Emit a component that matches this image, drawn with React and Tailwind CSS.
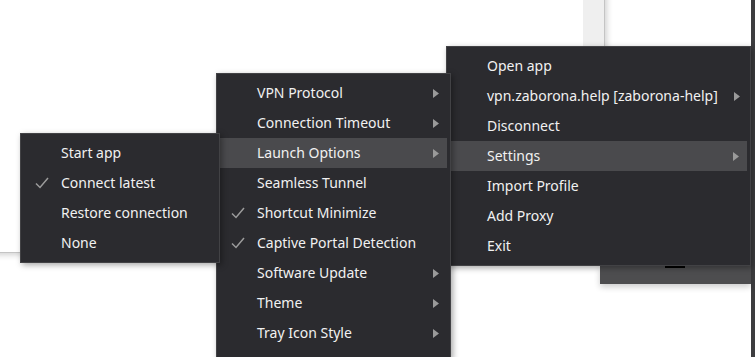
import React from 'react'

const font = { fontFamily: '"Noto Sans", "Open Sans", sans-serif' }

function Check() {
  return (
    <svg width="14" height="12" viewBox="0 0 14 12" className="block">
      <polyline points="1,6.5 5,10.5 13,1" fill="none" stroke="#9c9c9c" strokeWidth="1.5" />
    </svg>
  )
}

function Arrow() {
  return (
    <svg width="6" height="9" viewBox="0 0 6 9" className="block">
      <polygon points="0,0 6,4.5 0,9" fill="#9a9a9a" />
    </svg>
  )
}

function Item({ label, checked, sub, active }) {
  return (
    <div className={`h-[30px] grid grid-cols-[37px_1fr_auto] items-center ${active ? 'bg-[#4a4a4d]' : ''}`}>
      <div className="pl-[11px]">{checked && <Check />}</div>
      <span className="text-[14px] text-[#f1f1f1] whitespace-nowrap leading-none">{label}</span>
      <div className="pr-[8px] pl-4">{sub && <Arrow />}</div>
    </div>
  )
}

function Menu({ items, className }) {
  return (
    <div className={`absolute bg-[#2b2b2f] border border-[#424245] px-[3px] py-[4px] shadow-[2px_2px_6px_rgba(0,0,0,0.35)] ${className}`}>
      {items.map((it) => (
        <Item key={it.label} {...it} />
      ))}
    </div>
  )
}

export default function App() {
  const main = [
    { label: 'Open app' },
    { label: 'vpn.zaborona.help [zaborona-help]', sub: true },
    { label: 'Disconnect' },
    { label: 'Settings', sub: true, active: true },
    { label: 'Import Profile' },
    { label: 'Add Proxy' },
    { label: 'Exit' },
  ]
  const settings = [
    { label: 'VPN Protocol', sub: true },
    { label: 'Connection Timeout', sub: true },
    { label: 'Launch Options', sub: true, active: true },
    { label: 'Seamless Tunnel' },
    { label: 'Shortcut Minimize', checked: true },
    { label: 'Captive Portal Detection', checked: true },
    { label: 'Software Update', sub: true },
    { label: 'Theme', sub: true },
    { label: 'Tray Icon Style', sub: true },
  ]
  const launch = [
    { label: 'Start app' },
    { label: 'Connect latest', checked: true },
    { label: 'Restore connection' },
    { label: 'None' },
  ]

  return (
    <div className="relative w-[755px] h-[357px] overflow-hidden bg-white" style={font}>
      {/* window behind, right side */}
      <div className="absolute right-0 top-0 w-[4px] h-full bg-[#3d3d3f]" />
      <div className="absolute left-[600px] top-[266px] w-[151px] h-[18px] bg-[#4d4d4f] shadow-[0_3px_6px_rgba(0,0,0,0.2)]" />
      <div className="absolute left-[665px] top-[265px] w-[20px] h-[3px] bg-black" />

      {/* left window */}
      <div className="absolute left-[-10px] top-[-10px] w-[615px] h-[263px] bg-white border-r border-b border-[#c4c4c4] shadow-[2px_2px_6px_rgba(0,0,0,0.18)]">
        <div className="absolute left-[10px] top-[-13px] text-[22px] font-bold text-[#1d2638] leading-none">ic</div>
        <div className="absolute right-0 top-0 w-[21px] h-full bg-[#efefef]" />
      </div>

      <Menu items={main} className="left-[446px] top-[46px] w-[305px]" />
      <Menu items={settings} className="left-[216px] top-[73px] w-[235px] pb-[10px]" />
      <Menu items={launch} className="left-[20px] top-[133px] w-[200px]" />
    </div>
  )
}
